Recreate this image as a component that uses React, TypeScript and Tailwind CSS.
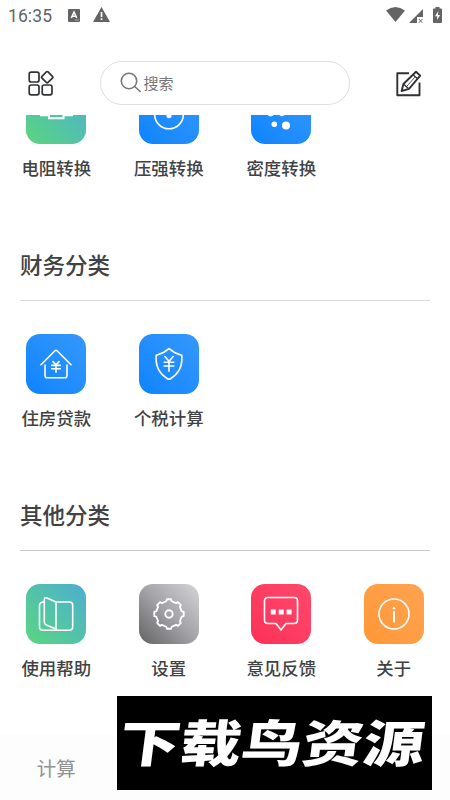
import type { ReactNode } from "react";

type Tile = {
    label: string;
    bg: string;
    icon: ReactNode;
};

const BLUE = "bg-linear-to-tr from-[#0a84ff] to-[#3498fb]";
const GREEN = "bg-linear-to-tr from-[#5bd57c] to-[#4fadcf]";

function Glyph({ children }: { children: ReactNode }) {
    return (
        <svg
            viewBox="0 0 60 60"
            className="size-[60px]"
            fill="none"
            stroke="white"
            strokeWidth="1.6"
            strokeLinecap="round"
            strokeLinejoin="round"
        >
            {children}
        </svg>
    );
}

const GEAR_PATH = Array.from({ length: 8 }, (_, i) => {
    const point = (r: number, deg: number) => {
        const a = ((i * 45 + deg - 90) * Math.PI) / 180;
        return `${(30 + r * Math.cos(a)).toFixed(2)} ${(30 + r * Math.sin(a)).toFixed(2)}`;
    };
    return `${i === 0 ? "M" : "L"}${point(13, -12)}L${point(14.9, -8)}L${point(14.9, 8)}L${point(13, 12)}Q${point(12.8, 22.5)} ${point(13, 33)}`;
}).join("") + "Z";

const converters: Tile[] = [
    {
        label: "电阻转换",
        bg: GREEN,
        icon: (
            <Glyph>
                <path d="M14 31.2h9M38 31.2h9M23 25h14.500v9.300H23z" strokeWidth="2" strokeLinecap="butt" strokeLinejoin="miter" />
            </Glyph>
        ),
    },
    {
        label: "压强转换",
        bg: BLUE,
        icon: (
            <Glyph>
                <circle cx="30" cy="30.5" r="14.3" />
                <path d="M30 20v10" />
                <circle cx="30" cy="31.6" r="2.6" fill="white" stroke="none" />
            </Glyph>
        ),
    },
    {
        label: "密度转换",
        bg: BLUE,
        icon: (
            <Glyph>
                <g fill="white" stroke="none">
                    <circle cx="19.5" cy="29" r="3.4" />
                    <circle cx="31" cy="29.5" r="2.8" />
                    <circle cx="23.3" cy="40.3" r="2.8" />
                    <circle cx="35" cy="41.5" r="4" />
                </g>
            </Glyph>
        ),
    },
];

const finance: Tile[] = [
    {
        label: "住房贷款",
        bg: BLUE,
        icon: (
            <Glyph>
                <path d="M15 30.8 28.7 17q1.3-1.2 2.6 0L45 30.8M19 31v10.5q0 2.3 2.3 2.3h17.4q2.3 0 2.3-2.3V31" />
                <path d="m27 27.6 3 3.4 3-3.4M30 31v7.2M25.7 31.4h8.6M25.7 34.8h8.6" />
            </Glyph>
        ),
    },
    {
        label: "个税计算",
        bg: BLUE,
        icon: (
            <Glyph>
                <path d="M30 14.7q6 5 12.8 6.6 1.4 15.7-11.3 23.4-1.5.9-3 0Q15.8 37 17.2 21.3 24 19.7 30 14.7z" />
                <path d="m25.8 22.5 4.2 4.7 4.2-4.7M30 27.2v10M25.2 28.2h9.6M25.2 32h9.6" />
            </Glyph>
        ),
    },
];

const others: Tile[] = [
    {
        label: "使用帮助",
        bg: GREEN,
        icon: (
            <Glyph>
                <path d="M30 18h13.5q3.2 0 3.2 3.2v21.8q0 3.2-3.2 3.2H17q-3.500 0-3.500-3.200V21.500q0-3.300 4-3.500M30 18v28" />
                <path d="M30 18l-9-4q-2.700-1-2.700 1.700v22.600q0 2 2 2.700L30 45" />
            </Glyph>
        ),
    },
    {
        label: "设置",
        bg: "bg-linear-to-tr from-[#636264] via-[#a3a3a7] to-[#d4d4da]",
        icon: (
            <Glyph>
                <path d={GEAR_PATH} strokeWidth="1.8" />
                <circle cx="30" cy="30" r="3.7" strokeWidth="1.9" />
            </Glyph>
        ),
    },
    {
        label: "意见反馈",
        bg: "bg-linear-to-tr from-[#fb2f58] to-[#ff496b]",
        icon: (
            <Glyph>
                <path d="M17 13.500h26q3.500 0 3.500 3.500v19q0 3.500-3.500 3.500h-8L30 46l-5-6.500h-8q-3.500 0-3.500-3.500V17q0-3.500 3.500-3.500z" strokeLinejoin="miter" />
                <path d="M19.800 25.500h5v5h-5zM27.700 25.500h5v5h-5zM35.600 25.500h5v5h-5z" fill="white" stroke="none" />
            </Glyph>
        ),
    },
    {
        label: "关于",
        bg: "bg-linear-to-tr from-[#ff9836] to-[#ffa351]",
        icon: (
            <Glyph>
                <circle cx="30" cy="30" r="15" />
                <circle cx="30" cy="24.2" r="1.3" fill="white" stroke="none" />
                <path d="M30 28v9.5" strokeWidth="2" />
            </Glyph>
        ),
    },
];

function StatusBar() {
    return (
        <div className="flex h-8 items-center pl-2 pr-2 text-[#646464]">
            <span className="w-[60px] font-[Roboto] text-[17.5px] leading-8 tracking-[0.1px]">16:35</span>
            <svg viewBox="0 0 12 13" className="-mt-0.5 h-[13px] w-3">
                <rect width="12" height="13" rx="1" fill="currentColor" />
                <path d="M3.3 9 6 3l2.7 6M4.3 7.2h3.4" fill="none" stroke="white" strokeWidth="1.5" />
                <path d="M7 11h4" stroke="white" strokeWidth=".5" />
            </svg>
            <svg viewBox="0 0 17 15" className="-mt-[3px] ml-[13px] h-[15px] w-[17px]">
                <path d="M8.5 0 17 15H0z" fill="currentColor" />
                <path d="M8.5 5v5M8.5 11.3v1.8" stroke="white" strokeWidth="1.7" />
            </svg>
            <div className="-mt-[3px] ml-auto flex items-center">
                <svg viewBox="0 0 19 15" className="h-[15px] w-[19px]">
                    <path d="M0 3.5q9.5-7 19 0L9.5 15z" fill="currentColor" />
                </svg>
                <svg viewBox="0 0 14 14" className="ml-1 mt-0.5 h-[14px] w-[14px]">
                    <path d="M0 14 14 0v8H8v6z" fill="currentColor" />
                    <path d="m9.8 10 3.6 3.8M13.4 10l-3.6 3.8" stroke="currentColor" />
                </svg>
                <svg viewBox="0 0 9 16" className="ml-[10px] h-4 w-[9px]">
                    <path d="M2.5 0h4v1.5H8q1 0 1 1V15q0 1-1 1H1q-1 0-1-1V2.500q0-1 1-1h1.500z" fill="currentColor" />
                    <path d="M5.300 4 2 9.300h2.200V13L7 7.900H5z" fill="white" />
                </svg>
            </div>
        </div>
    );
}

function Toolbar() {
    return (
        <div className="flex items-center justify-between pl-7 pr-7 pt-[29px]">
            <svg viewBox="0 0 26 26" className="size-[26px]" fill="none" stroke="#333437" strokeWidth="1.7">
                <rect x="1.2" y="2.2" width="9.8" height="9.8" rx="2" />
                <rect x="1.2" y="15" width="9.8" height="9.8" rx="2" />
                <rect x="14.2" y="15" width="9.8" height="9.8" rx="2" />
                <rect x="14.9" y="2.9" width="8.6" height="8.6" rx="1.2" transform="rotate(45 19.2 7.2)" />
            </svg>
            <div className="flex h-11 w-[250px] items-center rounded-full border border-[#dfdfdf] pl-[19px]">
                <svg viewBox="0 0 22 22" className="size-[22px]" fill="none" stroke="#777" strokeWidth="1.6" strokeLinecap="round">
                    <circle cx="9" cy="9" r="7.7" />
                    <path d="m14.7 14.5 5.5 5" />
                </svg>
                <span className="ml-[2px] text-[15px] leading-5 text-[#777]">搜索</span>
            </div>
            <svg viewBox="0 0 27 27" className="size-[27px]" fill="none" stroke="#303133" strokeWidth="1.9" strokeLinejoin="round">
                <path d="M14 3.200H2.300v22H24.500V12.500" />
                <path d="M21 1.800 25.200 5.600 14 18.800 6.600 21l1.800-7z" />
                <path d="m18 4.800 4.600 4M8.500 14l5 4.600" strokeWidth="1.300" />
                <path d="m19.800 7.200-8.600 9.800" strokeWidth=".8" />
            </svg>
        </div>
    );
}

function TileRow({ tiles }: { tiles: Tile[] }) {
    return (
        <div className="grid grid-cols-4">
            {tiles.map((tile) => (
                <div key={tile.label} className="flex flex-col items-center">
                    <div className={`size-[60px] overflow-hidden rounded-[14px] ${tile.bg}`}>{tile.icon}</div>
                    <span className="mt-3 text-[17.4px] font-medium leading-6 text-[#414244]">{tile.label}</span>
                </div>
            ))}
        </div>
    );
}

function Category({ title, line, tiles }: { title: string; line: string; tiles: Tile[] }) {
    return (
        <section className="pt-[66px]">
            <h2 className="px-5 text-[22.5px] font-medium leading-9 text-[#414244]">{title}</h2>
            <div className={`mx-5 mb-[33px] mt-[18px] h-px ${line}`} />
            <TileRow tiles={tiles} />
        </section>
    );
}

export default function App() {
    return (
        <div className="flex h-[800px] w-[450px] flex-col overflow-hidden bg-white font-['Noto_Sans_CJK_SC',sans-serif]">
            <header className="h-[115px] shrink-0">
                <StatusBar />
                <Toolbar />
            </header>
            <main className="h-[620px] shrink-0 overflow-hidden">
                <div className="-mt-[31px]">
                    <TileRow tiles={converters} />
                    <Category title="财务分类" line="bg-[#dadadb]" tiles={finance} />
                    <Category title="其他分类" line="bg-[#c8c8c9]" tiles={others} />
                </div>
            </main>
            <nav className="relative grid h-[65px] grid-cols-4 bg-[#fdfdfd]">
                <span className="text-center text-[19.5px] leading-[65px] text-[#929292]">计算</span>
                {/* banner floats above the tab bar */}
                <div className="absolute -top-[39px] left-[117px] flex h-[94px] w-[315px] items-center justify-center bg-black pb-1 pr-1">
                    <span className="-skew-x-6 scale-y-[0.82] whitespace-nowrap text-[61px] font-black leading-[94px] text-white">
                        下载鸟资源
                    </span>
                </div>
            </nav>
        </div>
    );
}
